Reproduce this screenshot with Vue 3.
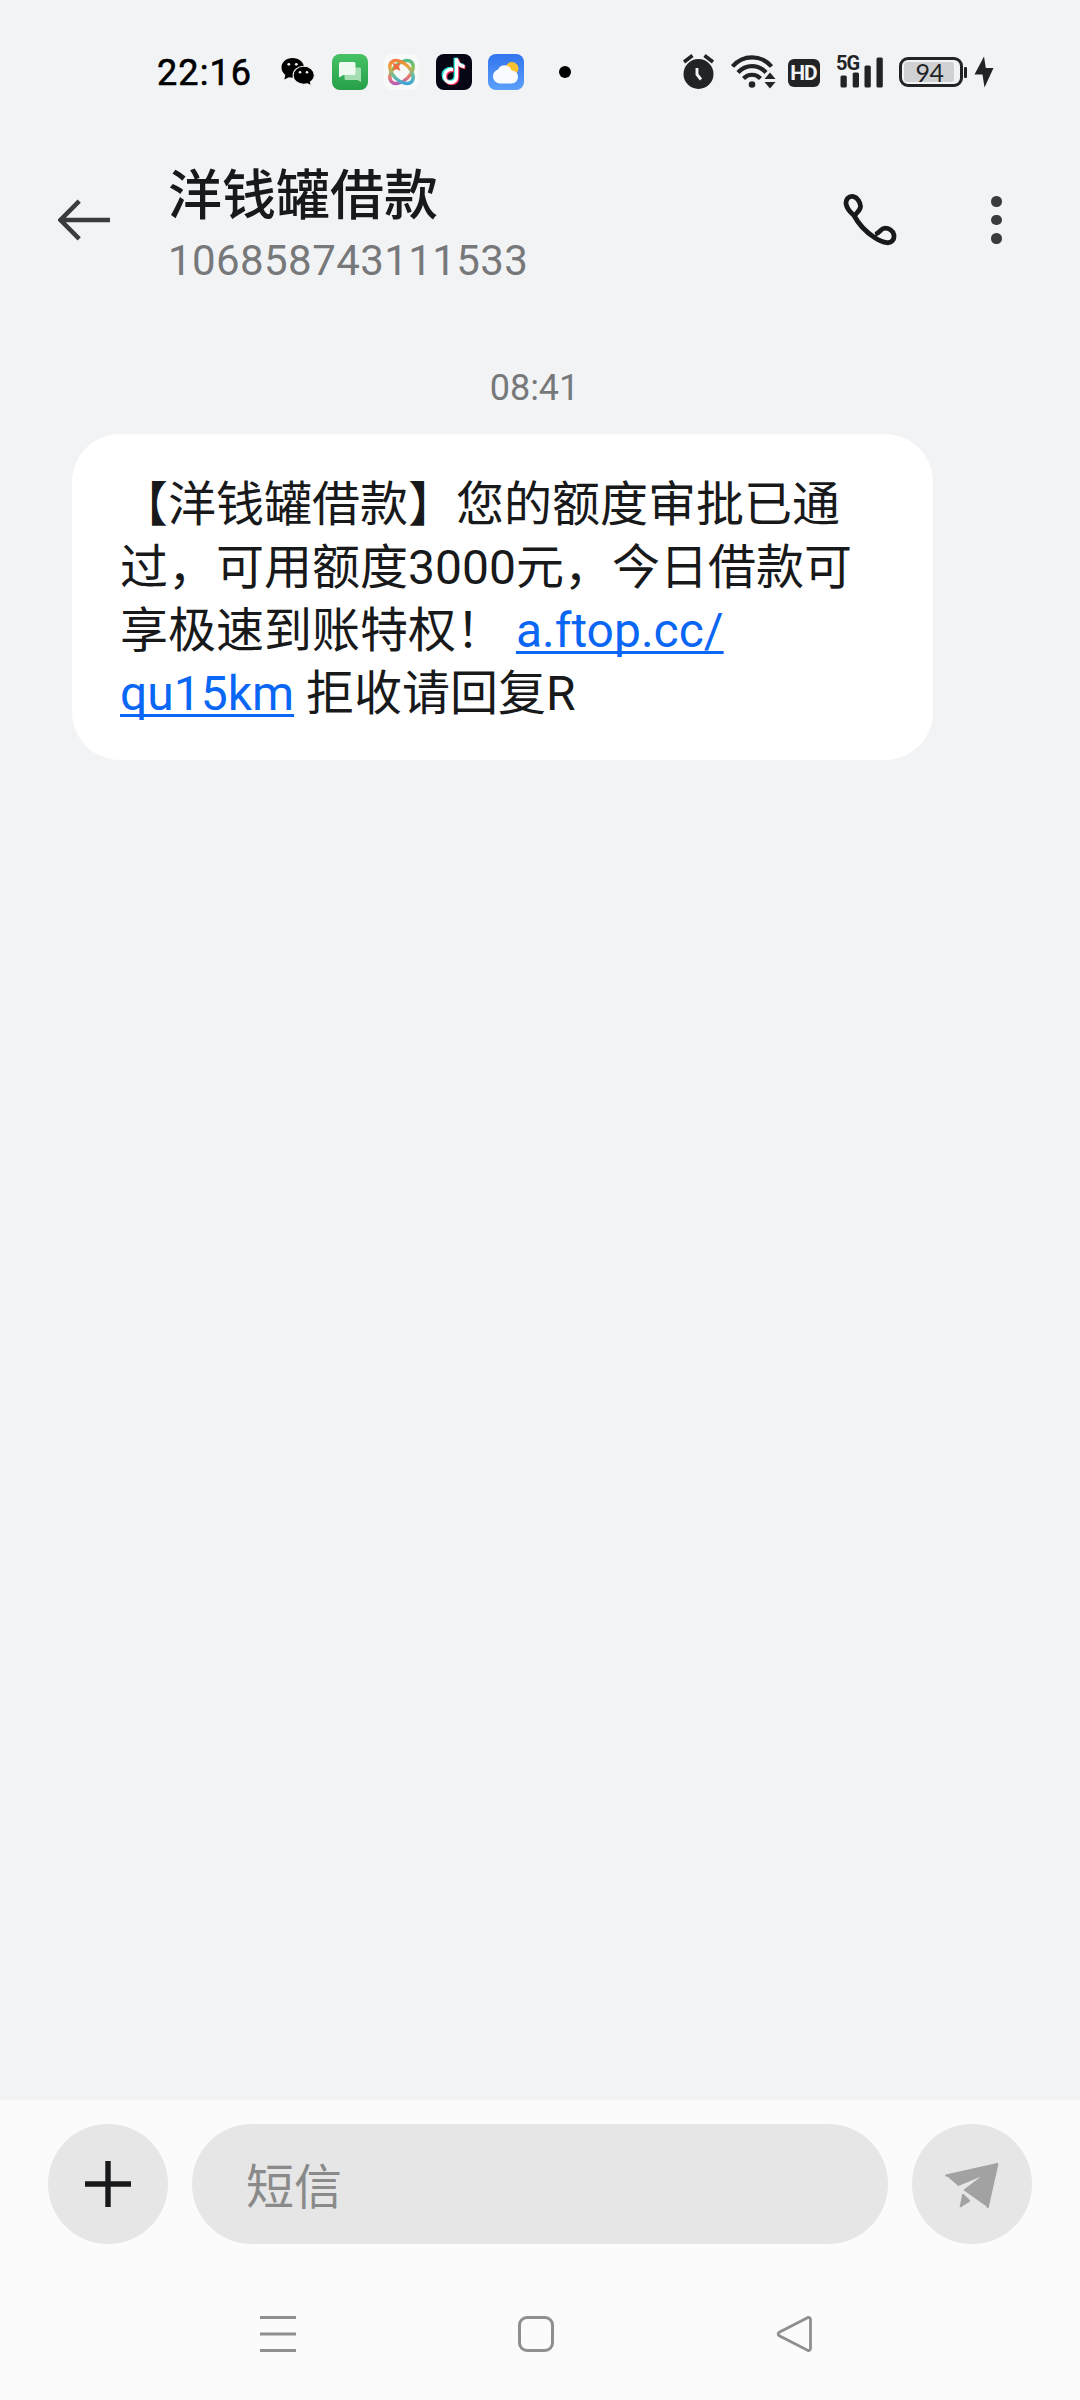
<script setup>
const contact = { name: '洋钱罐借款', number: '106858743111533' }
const lines = {
  one: '【洋钱罐借款】您的额度审批已通',
  two: '过，可用额度3000元，今日借款可',
  three: '享极速到账特权！',
  linkA: 'a.ftop.cc/',
  linkB: 'qu15km',
  four: '拒收请回复R'
}
</script>

<template>
  <div class="screen">
    <div class="status">
      <span class="clock">22:16</span>
      <svg class="wechat" width="34" height="30" viewBox="0 0 34 30">
        <path d="M11.5 1C5.2 1 .5 5.1.5 10.6c0 3 1.500 5.600 3.800 7.300L3.300 22.500l4.700-2.300c1.200.3 2.300.5 3.500.5 6.300 0 11.500-4.200 11.500-10S17.800 1 11.500 1z" fill="#000" />
        <path d="M22.800 9.300c-6 0-10.700 3.900-10.700 9s4.700 9 10.700 9c1.300 0 2.500-.2 3.600-.5l4 2-1-3.800c2.300-1.600 3.900-3.900 3.900-6.700 0-5.100-4.700-9-10.500-9z" fill="#000" stroke="#f2f3f5" stroke-width="1.100" />
        <circle cx="7.800" cy="7.300" r="1.400" fill="#f2f3f5" /><circle cx="15.300" cy="7.300" r="1.400" fill="#f2f3f5" />
        <circle cx="19" cy="15.300" r="1.300" fill="#f2f3f5" /><circle cx="26" cy="15.300" r="1.300" fill="#f2f3f5" />
      </svg>
      <svg class="app" width="36" height="36" viewBox="0 0 36 36">
        <defs><linearGradient id="gr" x1="0" y1="0" x2="0" y2="1"><stop offset="0" stop-color="#46c265" /><stop offset="1" stop-color="#27a04a" /></linearGradient></defs>
        <rect width="36" height="36" rx="8" fill="url(#gr)" />
        <path d="M14 13.500h13.500a1.500 1.500 0 0 1 1.500 1.500v13l-3.500-2H14a1.500 1.500 0 0 1-1.500-1.500V15a1.500 1.500 0 0 1 1.500-1.500z" fill="#a5deb2" />
        <path d="M8.500 8H22a1.500 1.500 0 0 1 1.500 1.500v10A1.500 1.500 0 0 1 22 21H11.500L7 23.500v-14A1.500 1.500 0 0 1 8.500 8z" fill="#eefaf0" />
      </svg>
      <svg class="app" width="36" height="36" viewBox="0 0 36 36">
        <defs>
          <linearGradient id="rb" gradientUnits="userSpaceOnUse" x1="6" y1="6" x2="30" y2="28"><stop offset="0" stop-color="#f4693c" /><stop offset=".35" stop-color="#eda43a" /><stop offset=".6" stop-color="#67bf9a" /><stop offset="1" stop-color="#2c9cee" /></linearGradient>
          <linearGradient id="rc" gradientUnits="userSpaceOnUse" x1="28" y1="7" x2="8" y2="30"><stop offset="0" stop-color="#3db9a0" /><stop offset=".4" stop-color="#8cc152" /><stop offset=".65" stop-color="#e97a6a" /><stop offset="1" stop-color="#a050e4" /></linearGradient>
        </defs>
        <rect width="35" height="36" rx="8" fill="#f8f9f9" />
        <g fill="none" stroke-width="3.400">
          <ellipse cx="17.500" cy="18" rx="14" ry="8.500" transform="rotate(-44 17.500 18)" stroke="url(#rc)" />
          <ellipse cx="17.500" cy="18" rx="14" ry="8.500" transform="rotate(44 17.500 18)" stroke="url(#rb)" />
        </g>
        <path d="m8.500 8.700 4 1.500 4-1.500-1.500 4 1.500 4-4-1.500-4 1.500 1.500-4z" fill="#ec6e40" />
      </svg>
      <svg class="app" width="36" height="36" viewBox="0 0 36 36">
        <rect width="36" height="36" rx="8" fill="#060714" />
        <g fill="none" stroke-width="3.900">
          <path d="M17 15.500c-5-.5-8.500 2.500-8.500 6.500s3 6.500 6.200 6.500c3.700 0 5.800-2.500 5.800-6V4.500c.5 4.500 3.500 7.500 8 8" stroke="#26e8df" transform="translate(-1 -.8)" />
          <path d="M17 15.500c-5-.5-8.500 2.500-8.500 6.500s3 6.500 6.200 6.500c3.700 0 5.800-2.500 5.800-6V4.500c.5 4.500 3.500 7.500 8 8" stroke="#f8315b" transform="translate(.9 .9)" />
          <path d="M17 15.500c-5-.5-8.500 2.500-8.500 6.500s3 6.500 6.200 6.500c3.700 0 5.800-2.500 5.800-6V4.500c.5 4.500 3.500 7.500 8 8" stroke="#fff" stroke-width="3.300" />
        </g>
      </svg>
      <svg class="app" width="36" height="36" viewBox="0 0 36 36">
        <defs><linearGradient id="sky" x1="0" y1="0" x2="0" y2="1"><stop offset="0" stop-color="#3274ee" /><stop offset="1" stop-color="#5ba0fb" /></linearGradient></defs>
        <rect width="36" height="36" rx="8" fill="url(#sky)" />
        <circle cx="24" cy="14.500" r="6.500" fill="#fcc130" />
        <path d="M11.500 29.500a7 7 0 0 1-6.500-7c0-3.500 2-6 5-7 1.500-3 3.800-4.200 6.500-4.200 3.500 0 6 2 7 5.200 4 .2 6.500 2.800 6.500 6.300 0 3.700-2.700 6.700-6.500 6.700z" fill="#f8fbff" />
      </svg>
      <span class="dot"></span>

      <svg class="alarm" width="34" height="36" viewBox="0 0 34 36">
        <circle cx="16.500" cy="20" r="15" fill="#222325" />
        <path d="m2 8 8.500-6.500M22.500 1.500 31 8" stroke="#222325" stroke-width="3.500" />
        <path d="M15 14v6.500l4 5" fill="none" stroke="#f2f3f5" stroke-width="2.900" />
      </svg>
      <svg class="wifi" width="46" height="36" viewBox="0 0 46 36">
        <g fill="none" stroke="#222325" stroke-width="4.200">
          <path d="M1.500 12.500c10.500-12.200 28.500-12.200 39 0" />
          <path d="M7 18.500c7.700-8.500 20.300-8.500 28 0" />
          <path d="M12.500 24.500c4.700-5 12.300-5 17 0" />
        </g>
        <circle cx="21" cy="30.500" r="3.300" fill="#222325" />
        <path d="m39 18.500 5.500 6.500h-11zM33.500 28h11L39 34.500z" fill="#222325" />
      </svg>
      <span class="hd">HD</span>
      <span class="signal">
        <span class="five">5G</span>
        <svg width="44" height="31" viewBox="0 0 44 31" fill="#222325">
          <rect x=".5" y="18.500" width="6.300" height="12" rx="1.500" /><rect x="12.700" y="15.500" width="6.300" height="15" rx="1.500" /><rect x="24.500" y="8.500" width="6.300" height="22" rx="1.500" /><rect x="36.500" y="0.500" width="6.300" height="30" rx="1.500" />
        </svg>
      </span>
      <span class="battery"><span class="level">94</span></span>
      <span class="nub"></span>
      <svg class="bolt" width="20" height="32" viewBox="0 0 20 32"><path d="M10 .5.500 18.500h8L10.500 31.500 19.500 12h-7.700z" fill="#222325" /></svg>
    </div>

    <header class="header">
      <svg class="back" width="54" height="42" viewBox="0 0 54 42"><path d="M1.500 21H52M21.200 2.200 2.500 21l18.700 18.800" fill="none" stroke="#3a3b3d" stroke-width="4.500" /></svg>
      <div class="who">
        <div class="name">{{ contact.name }}</div>
        <div class="number">{{ contact.number }}</div>
      </div>
      <svg class="phone" width="54" height="54" viewBox="0 0 54 54">
        <path d="M10 21.500c4 7.500 12 16.500 20.500 22 4 2.600 8.500 4.700 12.300 5.200 5 .6 8-3.500 7-8.200-.8-3.800-4.800-6.400-8.800-6.400-4.500 0-5.200 5-9.800 6.200M10.500 22.500C12 18.500 16.700 16.500 16.500 12c-.2-3.500-3-8.600-7-9.400C4.500 1.700 1.200 5.500 2.200 10.500c.8 4 3.800 7.500 7.800 11" transform="translate(1 0)" fill="none" stroke="#18191a" stroke-width="4.800" stroke-linejoin="round" />
      </svg>
      <div class="more"><i></i><i></i><i></i></div>
    </header>

    <main class="thread">
      <div class="time">08:41</div>
      <div class="bubble">
        <div>{{ lines.one }}</div>
        <div>{{ lines.two }}</div>
        <div>{{ lines.three }} <a>{{ lines.linkA }}</a></div>
        <div><a>{{ lines.linkB }}</a> {{ lines.four }}</div>
      </div>
    </main>

    <footer class="footer">
      <div class="compose">
        <div class="round"><svg width="46" height="46" viewBox="0 0 46 46"><path d="M0 23h46M23 0v46" stroke="#18191a" stroke-width="5.400" /></svg></div>
        <div class="field">短信</div>
        <div class="round">
          <svg class="send" width="56" height="48" viewBox="0 0 56 48" fill="#a2a2a2" stroke="#a2a2a2" stroke-linejoin="round">
            <path d="M1.500 13 54 1.500 44 45.500 19.300 28 36.600 14.700 14.400 24z" stroke="none" />
            <path d="M2.200 13.600 53.400 2 43.700 45.200" stroke-width="2" fill="none" stroke-linecap="round" />
            <path d="M19 32.500l6.500 6.300-9 5.700z" stroke-width="1.600" />
          </svg>
        </div>
      </div>
      <nav class="nav">
        <svg width="36" height="38" viewBox="0 0 36 38"><path d="M0 2.500h36M0 19h36M0 35.500h36" stroke="#8f8f8f" stroke-width="3" /></svg>
        <svg width="38" height="38" viewBox="0 0 38 38"><rect x="2.500" y="2.500" width="33" height="33" rx="7.500" fill="none" stroke="#8f8f8f" stroke-width="3" /></svg>
        <svg width="38" height="38" viewBox="0 0 38 38"><path d="M31.500 2.700 3.300 17.200q-2.400 1.800 0 3.600L31.500 35.300q3 .8 3-2V4.700q0-2.800-3-2z" fill="none" stroke="#8f8f8f" stroke-width="2.800" /></svg>
      </nav>
    </footer>
  </div>
</template>

<style>
body { margin: 0; background: #f2f3f5; }
</style>

<style scoped>
.screen {
  width: 1080px; height: 2400px; display: flex; flex-direction: column;
  background: #f2f3f5; color: #18191a; overflow: hidden;
  font-family: Roboto, "Noto Sans CJK SC", sans-serif;
  text-spacing-trim: space-all;
}
svg { display: block; flex: none; }
.status { height: 144px; display: flex; align-items: center; padding-left: 157px; box-sizing: border-box; }
.clock { width: 124px; font-size: 36px; font-weight: 400; letter-spacing: 1.100px; color: #000; -webkit-text-stroke: .6px #000; line-height: 40px; margin-top: 2px; flex: none; }
.wechat { margin-right: 17px; }
.app { margin-right: 16px; }
.dot { width: 12px; height: 12px; border-radius: 50%; background: #000; margin: 0 111px 0 19px; flex: none; }
.alarm { margin-right: 15px; }
.wifi { margin-right: 11px; }
.hd { width: 32px; height: 28px; border-radius: 6px; background: #222325; color: #f2f3f5; font: 700 21px/29px Roboto, sans-serif; letter-spacing: -1px; text-indent: -1px; text-align: center; margin: 2px 17px 0 0; flex: none; }
.signal { position: relative; width: 47px; height: 31px; padding-left: 3px; box-sizing: border-box; flex: none; margin-right: 15px; }
.five { position: absolute; left: -1px; top: -4px; font: 700 20px/20px Roboto, sans-serif; color: #222325; letter-spacing: -1px; }
.battery { width: 64px; height: 30px; box-sizing: border-box; border: 3px solid #222325; border-radius: 9px; padding: 2px; flex: none; }
.level { display: block; width: 50px; height: 20px; border-radius: 3px; background: #d0d1d2; color: #222325; font: 400 25px/21px Lato, sans-serif; letter-spacing: -.5px; text-align: center; padding-left: 1px; box-sizing: border-box; }
.nub { width: 3px; height: 11px; background: #222325; border-radius: 1px; margin: 0 7px 0 1px; flex: none; }

.header { height: 160px; display: flex; padding-left: 58px; box-sizing: border-box; }
.back { margin-top: 55px; }
.who { width: 675px; margin-left: 56px; box-sizing: border-box; padding-top: 13px; }
.name { font-size: 54px; font-weight: 500; line-height: 80px; height: 80px; }
.number { font-size: 42px; letter-spacing: .42px; color: #77787a; line-height: 50px; height: 50px; margin-top: -1px; }
.phone { margin-top: 50px; }
.more { margin: 52px 0 0 94px; display: flex; flex-direction: column; gap: 8px; }
.more i { width: 10.500px; height: 10.500px; border-radius: 50%; background: #3a3b3d; }

.thread { flex: 1; display: flex; flex-direction: column; align-items: flex-start; padding-top: 63px; box-sizing: border-box; }
.time { width: 1069px; text-align: center; font-size: 36px; line-height: 42px; color: #77787a; }
.bubble { width: 861px; height: 326px; margin: 25px 0 0 72px; border-radius: 48px; background: #fff; padding: 39px 48px; box-sizing: border-box; font-size: 48px; line-height: 63px; white-space: nowrap; }
.bubble div { height: 63px; }
a { color: #0a66f5; text-decoration: underline; text-decoration-thickness: 2.500px; text-underline-offset: 4px; text-decoration-skip-ink: none; }

.footer { height: 300px; background: #fbfbfb; }
.compose { display: flex; gap: 24px; padding: 24px 48px 0; }
.round { width: 120px; height: 120px; border-radius: 50%; background: #e6e6e6; display: flex; align-items: center; justify-content: center; flex: none; }
.send { margin-top: 3px; }
.field { flex: 1; height: 120px; border-radius: 60px; background: #e6e6e6; color: #8a8a8a; font-size: 48px; line-height: 127px; padding-left: 54px; box-sizing: border-box; font-weight: 400; }
.nav { display: flex; justify-content: space-between; width: 554px; padding: 71px 0 0 260px; }
</style>
